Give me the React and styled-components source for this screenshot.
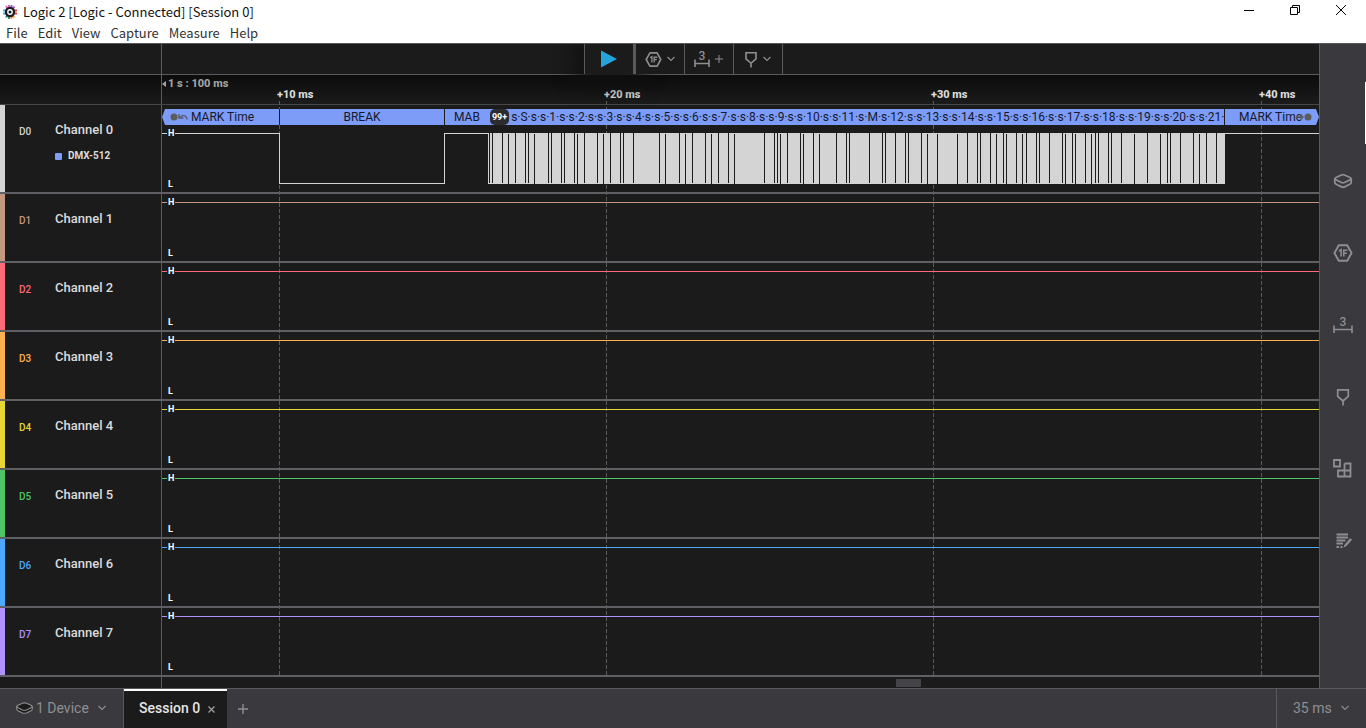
import React, { useState } from "react";
import styled, { createGlobalStyle, ThemeProvider } from "styled-components";

const theme = {
  bg: "#1b1b1b",
  panel: "#3a393d",
  line: "#5a5a5e",
  rowLine: "#606064",
  text: "#dcdcdc",
  muted: "#8f8f92",
  analyzer: "#7c9cf8",
};

// width of the visible capture window, in timeline units
const SPAN = 1157;

const channels = [
  { id: "D0", name: "Channel 0", color: "#d4d4d4", analyzer: "DMX-512" },
  { id: "D1", name: "Channel 1", color: "#c59680" },
  { id: "D2", name: "Channel 2", color: "#ff6a78" },
  { id: "D3", name: "Channel 3", color: "#ffb050" },
  { id: "D4", name: "Channel 4", color: "#e6d636" },
  { id: "D5", name: "Channel 5", color: "#4fc468" },
  { id: "D6", name: "Channel 6", color: "#4fa8ff" },
  { id: "D7", name: "Channel 7", color: "#ae92ff" },
];

const gridLines = [117, 444, 771, 1099];

// gaps in the dense part of the DMX frame: high edges and low edges
const highGaps = [
  327, 330, 340, 353, 363, 366, 386, 389, 399, 402, 412, 422, 435, 448, 458, 461, 471, 497, 517, 530, 543,
  556, 566, 602, 612, 615, 625, 638, 651, 674, 684, 687, 707, 720, 723, 733, 743, 746, 759, 805, 815, 818,
  828, 841, 854, 864, 874, 877, 887, 900, 910, 923, 933, 936, 946, 949, 959, 985, 1005, 1008, 1018, 1031,
  1044, 1054,
];
const lowGaps = [
  346, 372, 415, 441, 503, 523, 549, 572, 618, 641, 657, 765, 775, 795, 834, 844, 860, 903, 913, 929, 972,
  998, 1037,
];

const slots = Array.from({ length: 21 }, (_, i) => i + 1);
const slotText =
  "s·S·" + slots.map((n) => (n === 12 ? "s·M·s·12·" : `s·s·${n}·`)).join("");

const GlobalStyle = createGlobalStyle`
  * {
    box-sizing: border-box;
  }
  body {
    margin: 0;
    background: #1b1b1b;
    font-family: Roboto, "Liberation Sans", sans-serif;
  }
  button {
    padding: 0;
    border: 0;
    background: none;
    color: inherit;
    font: inherit;
    cursor: pointer;
  }
  svg {
    display: block;
    flex: none;
  }
`;

const Page = styled.div`
  position: relative;
  display: flex;
  flex-direction: column;
  min-height: 100vh;
  color: ${({ theme }) => theme.text};
`;

const WindowHead = styled.header`
  position: relative;
  z-index: 1;
  background: #ffffff;
  color: #111111;
  border-bottom: 1px solid ${({ theme }) => theme.line};
  font-family: "Noto Sans CJK SC", "Noto Sans", sans-serif;
`;

const TitleBar = styled.div`
  display: flex;
  align-items: center;
  height: 23px;
  padding-left: 2px;
  gap: 5px;
`;

const Title = styled.h1`
  flex: 1;
  margin: 0;
  font-size: 13px;
  font-weight: 400;
  line-height: 22px;
`;

const WindowButtons = styled.div`
  display: flex;
  align-self: flex-start;
  margin-right: 2px;
`;

const WindowButton = styled.button`
  display: grid;
  place-items: center;
  width: 46px;
  height: 20px;
`;

const MenuBar = styled.nav`
  display: flex;
  align-items: center;
  gap: 10px;
  height: 20px;
  padding-left: 6px;
  color: #333333;
  font-size: 13px;
  line-height: 18px;
`;

const Main = styled.main`
  flex: 1;
  display: flex;
`;

const Content = styled.div`
  flex: 1;
  min-width: 0;
  display: flex;
  flex-direction: column;
  border-right: 1px solid ${({ theme }) => theme.line};
  background: ${({ theme }) => theme.bg};
`;

const Toolbar = styled.div`
  display: flex;
  height: 31px;
  border-bottom: 1px solid ${({ theme }) => theme.line};
`;

const ToolbarLeft = styled.div`
  flex: 1 0 48px;
`;

const ToolbarRight = styled.div`
  flex: 1 0 0;
`;

const LabelCell = styled.div`
  flex: none;
  width: 162px;
  height: 100%;
  border-right: 1px solid ${({ theme }) => theme.line};
`;

const ToolButton = styled.button`
  position: relative;
  display: flex;
  align-items: center;
  justify-content: center;
  gap: 5px;
  width: 49px;
  height: 30px;
  padding-right: 1px;
  border-right: 1px solid ${({ theme }) => theme.line};
  background: ${({ theme }) => theme.bg};
  color: ${({ theme }) => theme.muted};
`;

const PlayButton = styled(ToolButton)`
  width: 52px;
  padding: 0;
  border-left: 1px solid ${({ theme }) => theme.line};
  border-right-width: 3px;
  box-shadow: 0 2px 20px 8px #101010;
  color: #25a5dc;
`;

const Ruler = styled.div`
  display: flex;
  height: 30px;
  border-bottom: 1px solid #47474a;
  background: linear-gradient(rgba(8, 8, 8, 0.8), rgba(27, 27, 27, 0.2));
`;

const RulerScale = styled.div`
  flex: 1;
  font-size: 11px;
  font-weight: 800;
  line-height: 12px;
`;

const RulerStart = styled.div`
  display: flex;
  align-items: center;
  gap: 2px;
  padding-top: 3px;
  color: #a2a2a2;
`;

const RulerTicks = styled.div`
  display: grid;
  grid-template-columns: 115fr 327fr 327fr 328fr 60fr;
  line-height: 10px;
  white-space: nowrap;
`;

const Channels = styled.div`
  position: relative;
`;

const GridOverlay = styled.svg`
  position: absolute;
  top: -4px;
  left: 162px;
  width: calc(100% - 162px);
  height: calc(100% + 4px);
`;

const Channel = styled.section`
  display: flex;
  border-bottom: 2px solid ${({ theme }) => theme.rowLine};
`;

const ChannelLabel = styled.div`
  display: grid;
  grid-template-columns: 36px 1fr;
  align-content: start;
  align-items: center;
  row-gap: 9px;
  flex: none;
  width: 162px;
  padding: 15px 0 0 14px;
  border-left: 5px solid ${({ $color }) => $color};
  border-right: 1px solid ${({ theme }) => theme.line};
`;

const ChannelId = styled.span`
  padding-top: 5px;
  color: ${({ $color }) => $color};
  font-size: 10px;
  font-weight: 500;
  line-height: 14px;
`;

const ChannelName = styled.span`
  font-size: 13px;
  font-weight: 500;
  line-height: 18px;
`;

const AnalyzerName = styled.span`
  grid-column: 2;
  display: flex;
  align-items: center;
  gap: 6px;
  font-size: 10px;
  font-weight: 700;
  line-height: 16px;

  &::before {
    content: "";
    width: 7px;
    height: 7px;
    border-radius: 1px;
    background: ${({ theme }) => theme.analyzer};
  }
`;

const Track = styled.div`
  position: relative;
  flex: 1;
  min-width: 0;
`;

const Trace = styled.div`
  position: relative;
  height: 67px;

  svg {
    width: 100%;
    height: 67px;
  }
`;

const Level = styled.span`
  position: absolute;
  top: ${({ $low }) => ($low ? "54px" : "3px")};
  left: 5px;
  padding: 0 1px;
  background: ${({ theme }) => theme.bg};
  color: #ffffff;
  font-size: 9px;
  font-weight: 700;
  line-height: 11px;
`;

const Frames = styled.div`
  display: grid;
  grid-template-columns: 118fr 165fr 780fr 94fr;
  height: 16px;
  margin-top: 4px;
  color: #14182a;
  font-size: 12px;
  line-height: 16px;
  white-space: nowrap;
  clip-path: polygon(0 50%, 3px 0, calc(100% - 3px) 0, 100% 50%, calc(100% - 3px) 100%, 3px 100%);
`;

const Frame = styled.div`
  display: flex;
  align-items: center;
  justify-content: ${({ $align }) => $align || "center"};
  gap: ${({ $gap }) => $gap || 0}px;
  min-width: 0;
  overflow: hidden;
  padding-left: ${({ $indent }) => $indent || 0}px;
  border-right: ${({ $last }) => ($last ? 0 : "1px solid #1b1b1b")};
  background: ${({ theme }) => theme.analyzer};
`;

const Count = styled.span`
  margin: 0 2px 0 10px;
  padding: 0 2px;
  border-radius: 5px;
  background: #2c2c30;
  color: #ffffff;
  font-size: 9px;
  font-weight: 700;
`;

const ScrollRow = styled.div`
  flex: 1;
  display: flex;
  min-height: 11px;
`;

const ScrollTrack = styled.div`
  flex: 1;
  display: grid;
  grid-template-columns: 734fr 25fr 398fr;
  padding: 2px 0 1px;
`;

const ScrollThumb = styled.div`
  grid-column: 2;
  background: #444448;
`;

const Sidebar = styled.aside`
  display: flex;
  flex-direction: column;
  width: 46px;
  padding-top: 101px;
  background: ${({ theme }) => theme.panel};
  color: ${({ theme }) => theme.muted};
`;

const SideButton = styled.button`
  display: grid;
  place-items: center;
  width: 46px;
  height: 72px;
`;

const EdgeHandle = styled.div`
  position: absolute;
  top: 82px;
  right: 0;
  width: 1px;
  height: 62px;
  background: #ffffff;
`;

const Footer = styled.footer`
  display: flex;
  height: 40px;
  border-top: 1px solid ${({ theme }) => theme.line};
  background: ${({ theme }) => theme.panel};
  color: ${({ theme }) => theme.muted};
  font-size: 14px;
`;

const DeviceButton = styled.button`
  display: flex;
  align-items: center;
  gap: 3px;
  width: 124px;
  padding: 0 0 2px 16px;
  border-right: 1px solid ${({ theme }) => theme.line};

  svg:last-child {
    margin-left: 6px;
  }
`;

const Tab = styled.div`
  display: flex;
  align-items: center;
  gap: 8px;
  width: 103px;
  padding-left: 15px;
  padding-bottom: 4px;
  border-top: 2px solid #ffffff;
  background: ${({ theme }) => theme.bg};
  color: #e6e6e6;
  font-weight: 500;
`;

const TabClose = styled.button`
  padding-top: 3px;
  color: #a0a0a0;
`;

const AddButton = styled.button`
  display: grid;
  place-items: center;
  width: 32px;
`;

const RangeButton = styled.button`
  display: flex;
  align-items: center;
  gap: 9px;
  width: 90px;
  margin-left: auto;
  padding: 0 0 2px 16px;
  border-left: 1px solid ${({ theme }) => theme.line};
`;

const Chevron = () => (
  <svg width="8" height="6" viewBox="0 0 8 6" fill="none" stroke="currentColor" strokeWidth="1.1">
    <path d="M0.5 1 4 4.5 7.5 1" />
  </svg>
);

const AppLogo = () => (
  <svg width="16" height="16" viewBox="0 0 16 16">
    <g strokeWidth="2" fill="none">
      <path d="M4 2 5.500 4.500M7 1V4" stroke="#d86ab8" />
      <path d="M9.500 1V4M12.500 2.500 10.500 5" stroke="#9b59c9" />
      <path d="M1 6.500H4M1 9.500H4" stroke="#3fb2e8" />
      <path d="M15 6.500H12M15 9.500H12" stroke="#e8483f" />
      <path d="M4 13.500 5.500 11M7 15V12" stroke="#3b8f8a" />
      <path d="M9.500 15V12M12.500 13.500 10.500 11" stroke="#f09b38" />
    </g>
    <circle cx="8" cy="8" r="5.200" fill="#1c1a22" />
    <circle cx="8" cy="8" r="2.200" fill="#1c1a22" stroke="#ffffff" strokeWidth="1.400" />
  </svg>
);

const AnalyzerIcon = ({ size = 20 }) => (
  <svg width={size} height={size} viewBox="0 0 18 18" fill="none" stroke="currentColor">
    <path d="M5.200 2H12.800L16.700 9 12.800 16H5.200L1.300 9Z" strokeWidth="1.700" strokeLinejoin="round" />
    <path d="M5.400 7.200 7.300 6V12.200M9.700 12.200V6.600H13M9.700 9.200H12.400" strokeWidth="1.400" />
  </svg>
);

const MeasureText = styled.text`
  fill: currentColor;
  stroke: none;
  font-size: 12px;
  font-weight: 500;
`;

const MeasureIcon = ({ width = 20 }) => (
  <svg width={width} height="20" fill="none" stroke="currentColor" strokeWidth="1.600">
    <MeasureText x={width / 2} y="11" textAnchor="middle">
      3
    </MeasureText>
    <path d={`M1 10.500V18M${width - 1} 10.500V18M1 14.500H${width - 1}`} />
  </svg>
);

const MarkerIcon = ({ height = 18 }) => (
  <svg width="14" height={height} viewBox="0 0 14 18" fill="none" stroke="currentColor" strokeWidth="1.700">
    <path d="M1.700 1.800H12.300V8.300L7 13 1.700 8.300ZM7 12.500V17.500" />
  </svg>
);

const DeviceIcon = () => (
  <svg width="17" height="12" viewBox="0 0 17 12" stroke="currentColor" strokeWidth="1.100">
    <path d="M0.700 4.500V7Q0.700 8 2 8.700L6.500 10.900Q8.500 11.700 10.500 10.900L15 8.700Q16.300 8 16.300 7V4.500" fill="#1b1b1b" />
    <path d="M0.700 4.500Q1 3.700 2.500 3L6.500 1.200Q8.500 0.500 10.500 1.200L14.500 3Q16 3.700 16.300 4.500 16 5.400 14.500 6L10.500 7.900Q8.500 8.600 6.500 7.900L2.500 6Q1 5.400 0.700 4.500Z" fill="#1b1b1b" />
  </svg>
);

const SideDeviceIcon = () => (
  <svg width="20" height="16" viewBox="0 0 20 16" fill="none" stroke="currentColor" strokeWidth="1.800">
    <path d="M1.800 6Q2 5 3.500 4.300L8.500 2Q10 1.300 11.500 2L16.500 4.300Q18 5 18.200 6V9.500Q18.200 10.600 16.800 11.300L11.500 13.900Q10 14.600 8.500 13.900L3.200 11.300Q1.800 10.600 1.800 9.500Z" />
    <path d="M1.800 6.200 8.500 9.500Q10 10.200 11.500 9.500L18.200 6.200" />
  </svg>
);

const ExtensionIcon = () => (
  <svg width="20" height="20" viewBox="0 0 20 20" fill="none" stroke="currentColor" strokeWidth="1.800">
    <path d="M1 1H7V7.500H1ZM11.500 4.500H17.500V17.500H5V11.500H17.500M11.500 4.500V17.500" />
  </svg>
);

const NotesIcon = () => (
  <svg width="18" height="18" viewBox="0 0 18 18" fill="none" stroke="currentColor" strokeWidth="1.800">
    <path d="M2.500 2.500H14M2.500 5.500H14M2.500 8.500H11.500M2.500 11.500H9M2.500 15H5M6.500 15H8.500" />
    <path d="M9.500 15.500 10.500 12.800 16.200 6 18 7.800 12 14.500Z" fill="currentColor" stroke="none" />
  </svg>
);

const MarkerStart = () => (
  <svg width="18" height="8" viewBox="0 0 18 8" fill="none" stroke="#5c5f6c" strokeWidth="1.500">
    <circle cx="4" cy="4" r="3.500" fill="#5c5c5c" stroke="none" />
    <path d="M9 1V5H13.500M9.500 5Q12.500 1.500 15 2.800 17 4 17 6.500" />
  </svg>
);

const MarkerEnd = styled.svg`
  margin-left: -6px;
`;

const sideItems = [
  { label: "Device settings", icon: <SideDeviceIcon /> },
  { label: "Analyzers", icon: <AnalyzerIcon /> },
  { label: "Measurements", icon: <MeasureIcon /> },
  { label: "Timing markers", icon: <MarkerIcon /> },
  { label: "Extensions", icon: <ExtensionIcon /> },
  { label: "Notes", icon: <NotesIcon /> },
];

const DmxWave = ({ color }) => (
  <svg viewBox={`0 0 ${SPAN} 67`} preserveAspectRatio="none" shapeRendering="crispEdges">
    <path d="M0 8.500H117.500V58.500H282.500V8.500H326.500M1063 8.500H1157" fill="none" stroke={color} />
    <rect x="326" y="8" width="737" height="51" fill={color} />
    {highGaps.map((x) => (
      <rect key={x} x={x} y="8" width="1" height="50" fill={theme.bg} />
    ))}
    {lowGaps.map((x) => (
      <rect key={x} x={x} y="9" width="1" height="50" fill={theme.bg} />
    ))}
  </svg>
);

const IdleWave = ({ color }) => (
  <svg viewBox={`0 0 ${SPAN} 67`} preserveAspectRatio="none" shapeRendering="crispEdges">
    <rect y="8" width={SPAN} height="1" fill={color} />
  </svg>
);

const DmxFrames = () => (
  <Frames>
    <Frame $align="flex-start" $indent={8} $gap={3}>
      <MarkerStart />
      <span>MARK Time</span>
    </Frame>
    <Frame>BREAK</Frame>
    <Frame $align="flex-start" $indent={9}>
      <span>MAB</span>
      <Count>99+</Count>
      <span>{slotText}</span>
    </Frame>
    <Frame $last $align="flex-start" $indent={14}>
      <span>MARK Time</span>
      <MarkerEnd width="16" height="8" viewBox="0 0 16 8">
        <path d="M0 4H7M4 1 7 4 4 7" fill="none" stroke="#5c5f6c" strokeWidth="1.500" />
        <circle cx="12" cy="4" r="3.500" fill="#5c5c5c" />
      </MarkerEnd>
    </Frame>
  </Frames>
);

const App = () => {
  const [running, setRunning] = useState(false);

  return (
    <ThemeProvider theme={theme}>
      <GlobalStyle />
      <Page>
        <WindowHead>
          <TitleBar>
            <AppLogo />
            <Title>Logic 2 [Logic - Connected] [Session 0]</Title>
            <WindowButtons>
              <WindowButton aria-label="Minimize">
                <svg width="10" height="10" stroke="#000000">
                  <path d="M0 5.500H10" />
                </svg>
              </WindowButton>
              <WindowButton aria-label="Restore">
                <svg width="10" height="10" fill="none" stroke="#000000">
                  <path d="M0.500 2.500H7.500V9.500H0.500ZM2.500 2.500V0.500H9.500V7.500H7.500" />
                </svg>
              </WindowButton>
              <WindowButton aria-label="Close">
                <svg width="10" height="10" stroke="#000000">
                  <path d="M0 0 10 10M10 0 0 10" />
                </svg>
              </WindowButton>
            </WindowButtons>
          </TitleBar>
          <MenuBar>
            {["File", "Edit", "View", "Capture", "Measure", "Help"].map((item) => (
              <button key={item}>{item}</button>
            ))}
          </MenuBar>
        </WindowHead>

        <Main>
          <Content>
            <Toolbar>
              <ToolbarLeft>
                <LabelCell />
              </ToolbarLeft>
              <PlayButton aria-label="Start capture" aria-pressed={running} onClick={() => setRunning(!running)}>
                <svg width="16" height="18" viewBox="0 0 16 18">
                  <path d="M0 0.500 16 9 0 17.500Z" fill="currentColor" />
                </svg>
              </PlayButton>
              <ToolButton aria-label="Add analyzer">
                <AnalyzerIcon size={17} />
                <Chevron />
              </ToolButton>
              <ToolButton aria-label="Add measurement">
                <MeasureIcon width={16} />
                <svg width="8" height="8" stroke="currentColor">
                  <path d="M4 0V8M0 4H8" />
                </svg>
              </ToolButton>
              <ToolButton aria-label="Add timing marker">
                <MarkerIcon height={17} />
                <Chevron />
              </ToolButton>
              <ToolbarRight />
            </Toolbar>

            <Ruler>
              <LabelCell />
              <RulerScale>
                <RulerStart>
                  <svg width="4" height="6">
                    <path d="M0 3 4 0V6Z" fill="#a2a2a2" />
                  </svg>
                  1 s : 100 ms
                </RulerStart>
                <RulerTicks>
                  <span />
                  <span>+10 ms</span>
                  <span>+20 ms</span>
                  <span>+30 ms</span>
                  <span>+40 ms</span>
                </RulerTicks>
              </RulerScale>
            </Ruler>

            <Channels>
              <GridOverlay shapeRendering="crispEdges">
                {gridLines.map((x) => (
                  <line
                    key={x}
                    x1={`${((x + 0.5) / SPAN) * 100}%`}
                    x2={`${((x + 0.5) / SPAN) * 100}%`}
                    y1="0"
                    y2="100%"
                    stroke="#5c5c5c"
                    strokeDasharray="4 2"
                  />
                ))}
              </GridOverlay>
              {channels.map((ch) => (
                <Channel key={ch.id}>
                  <ChannelLabel $color={ch.color}>
                    <ChannelId $color={ch.color}>{ch.id}</ChannelId>
                    <ChannelName>{ch.name}</ChannelName>
                    {ch.analyzer && <AnalyzerName>{ch.analyzer}</AnalyzerName>}
                  </ChannelLabel>
                  <Track>
                    {ch.analyzer && <DmxFrames />}
                    <Trace>
                      {ch.analyzer ? <DmxWave color={ch.color} /> : <IdleWave color={ch.color} />}
                      <Level>H</Level>
                      <Level $low>L</Level>
                    </Trace>
                  </Track>
                </Channel>
              ))}
            </Channels>

            <ScrollRow>
              <LabelCell />
              <ScrollTrack>
                <ScrollThumb />
              </ScrollTrack>
            </ScrollRow>
          </Content>

          <Sidebar>
            {sideItems.map((item) => (
              <SideButton key={item.label} aria-label={item.label}>
                {item.icon}
              </SideButton>
            ))}
          </Sidebar>
        </Main>

        <Footer>
          <DeviceButton>
            <DeviceIcon />
            1 Device
            <Chevron />
          </DeviceButton>
          <Tab>
            Session 0
            <TabClose aria-label="Close session">
              <svg width="7" height="7" stroke="currentColor" strokeWidth="1.200">
                <path d="M0.500 0.500 6.500 6.500M6.500 0.500 0.500 6.500" />
              </svg>
            </TabClose>
          </Tab>
          <AddButton aria-label="Add session">
            <svg width="10" height="10" stroke="currentColor" strokeWidth="1.400">
              <path d="M5 0V10M0 5H10" />
            </svg>
          </AddButton>
          <RangeButton>
            35 ms
            <Chevron />
          </RangeButton>
        </Footer>
        <EdgeHandle />
      </Page>
    </ThemeProvider>
  );
};

export default App;
